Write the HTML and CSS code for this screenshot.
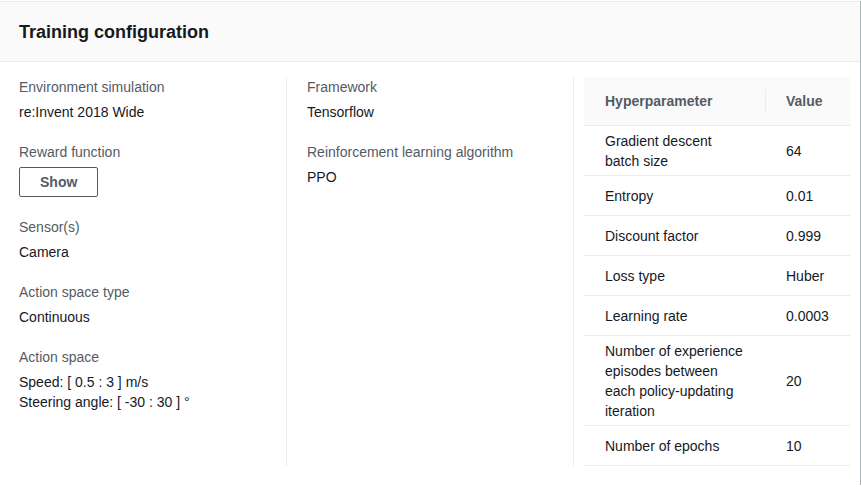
FILE: index.html
```html
<!DOCTYPE html>
<html lang="en">
<head>
<meta charset="utf-8">
<title>Training configuration</title>
<link rel="stylesheet" href="styles.css">
</head>
<body>
<div class="card">
  <div class="card-header">
    <h2 class="title">Training configuration</h2>
  </div>
  <div class="card-body">
    <div class="col col-first">
      <div class="field">
        <div class="label">Environment simulation</div>
        <div class="value">re:Invent 2018 Wide</div>
      </div>
      <div class="field">
        <div class="label">Reward function</div>
        <div class="value"><button class="btn" type="button">Show</button></div>
      </div>
      <div class="field">
        <div class="label">Sensor(s)</div>
        <div class="value">Camera</div>
      </div>
      <div class="field">
        <div class="label">Action space type</div>
        <div class="value">Continuous</div>
      </div>
      <div class="field">
        <div class="label">Action space</div>
        <div class="value">Speed: [ 0.5 : 3 ] m/s<br>Steering angle: [ -30 : 30 ] °</div>
      </div>
    </div>
    <div class="col col-mid">
      <div class="field">
        <div class="label">Framework</div>
        <div class="value">Tensorflow</div>
      </div>
      <div class="field">
        <div class="label">Reinforcement learning algorithm</div>
        <div class="value">PPO</div>
      </div>
    </div>
    <div class="col col-last">
      <div class="table">
        <div class="thead">
          <div class="th">Hyperparameter</div>
          <div class="th th-sep">Value</div>
        </div>
        <div class="tr"><div class="td">Gradient descent batch size</div><div class="td">64</div></div>
        <div class="tr"><div class="td">Entropy</div><div class="td">0.01</div></div>
        <div class="tr"><div class="td">Discount factor</div><div class="td">0.999</div></div>
        <div class="tr"><div class="td">Loss type</div><div class="td">Huber</div></div>
        <div class="tr"><div class="td">Learning rate</div><div class="td">0.0003</div></div>
        <div class="tr"><div class="td">Number of experience episodes between each policy-updating iteration</div><div class="td">20</div></div>
        <div class="tr"><div class="td">Number of epochs</div><div class="td">10</div></div>
      </div>
    </div>
  </div>
</div>
</body>
</html>
```
FILE: styles.css
```css
* { box-sizing: border-box; }

html, body {
  margin: 0;
  padding: 0;
  background: #ffffff;
}

body {
  font-family: "Liberation Sans", Arial, sans-serif;
  font-size: 14px;
  line-height: 20px;
  color: #16191f;
}

.card {
  margin-top: 1px;
  width: 860px;
  background: #ffffff;
  border-top: 1px solid #eaeded;
  box-shadow: 0 1px 0 0 #879196, 1px 0 0 0 #aab7b8, 1px 1px 0 0 #aab7b8;
}

.card-header {
  height: 60px;
  background: #fafafa;
  border-bottom: 1px solid #eaeded;
  display: flex;
  align-items: center;
  padding-left: 19px;
}

.title {
  margin: 0;
  font-size: 18px;
  line-height: 22px;
  font-weight: 700;
  color: #16191f;
}

.card-body {
  display: grid;
  grid-template-columns: 286px 287px 1fr;
  padding: 15px 0 19px 0;
}

.col {
  display: flex;
  flex-direction: column;
  gap: 20px;
}

.col-first { padding-left: 19px; }

.col-mid {
  border-left: 1px solid #eaeded;
  padding-left: 20px;
}

.col-last {
  border-left: 1px solid #eaeded;
  padding-left: 10px;
  padding-right: 9px;
}

.label {
  color: #545b64;
  line-height: 20px;
}

.value {
  margin-top: 5px;
  color: #16191f;
  line-height: 20px;
}

.btn {
  display: inline-block;
  height: 30px;
  padding: 0 20px;
  border: 1px solid #545b64;
  border-radius: 2px;
  background: #ffffff;
  color: #545b64;
  font-family: "Liberation Sans", Arial, sans-serif;
  font-size: 14px;
  font-weight: 700;
  line-height: 28px;
  cursor: pointer;
}

.table {
  width: 266px;
}

.thead {
  display: grid;
  grid-template-columns: 181px 1fr;
  align-items: center;
  min-height: 49px;
  background: #fafafa;
  border-bottom: 1px solid #eaeded;
}

.th {
  font-weight: 700;
  color: #545b64;
  padding-left: 21px;
  line-height: 20px;
}

.th-sep {
  border-left: 1px solid #eaeded;
  padding-left: 20px;
  line-height: 23px;
}

.tr {
  display: grid;
  grid-template-columns: 181px 1fr;
  align-items: center;
  min-height: 40px;
  border-bottom: 1px solid #eaeded;
}

.td {
  padding: 5px 20px 4px 21px;
  line-height: 20px;
  color: #16191f;
}
```
